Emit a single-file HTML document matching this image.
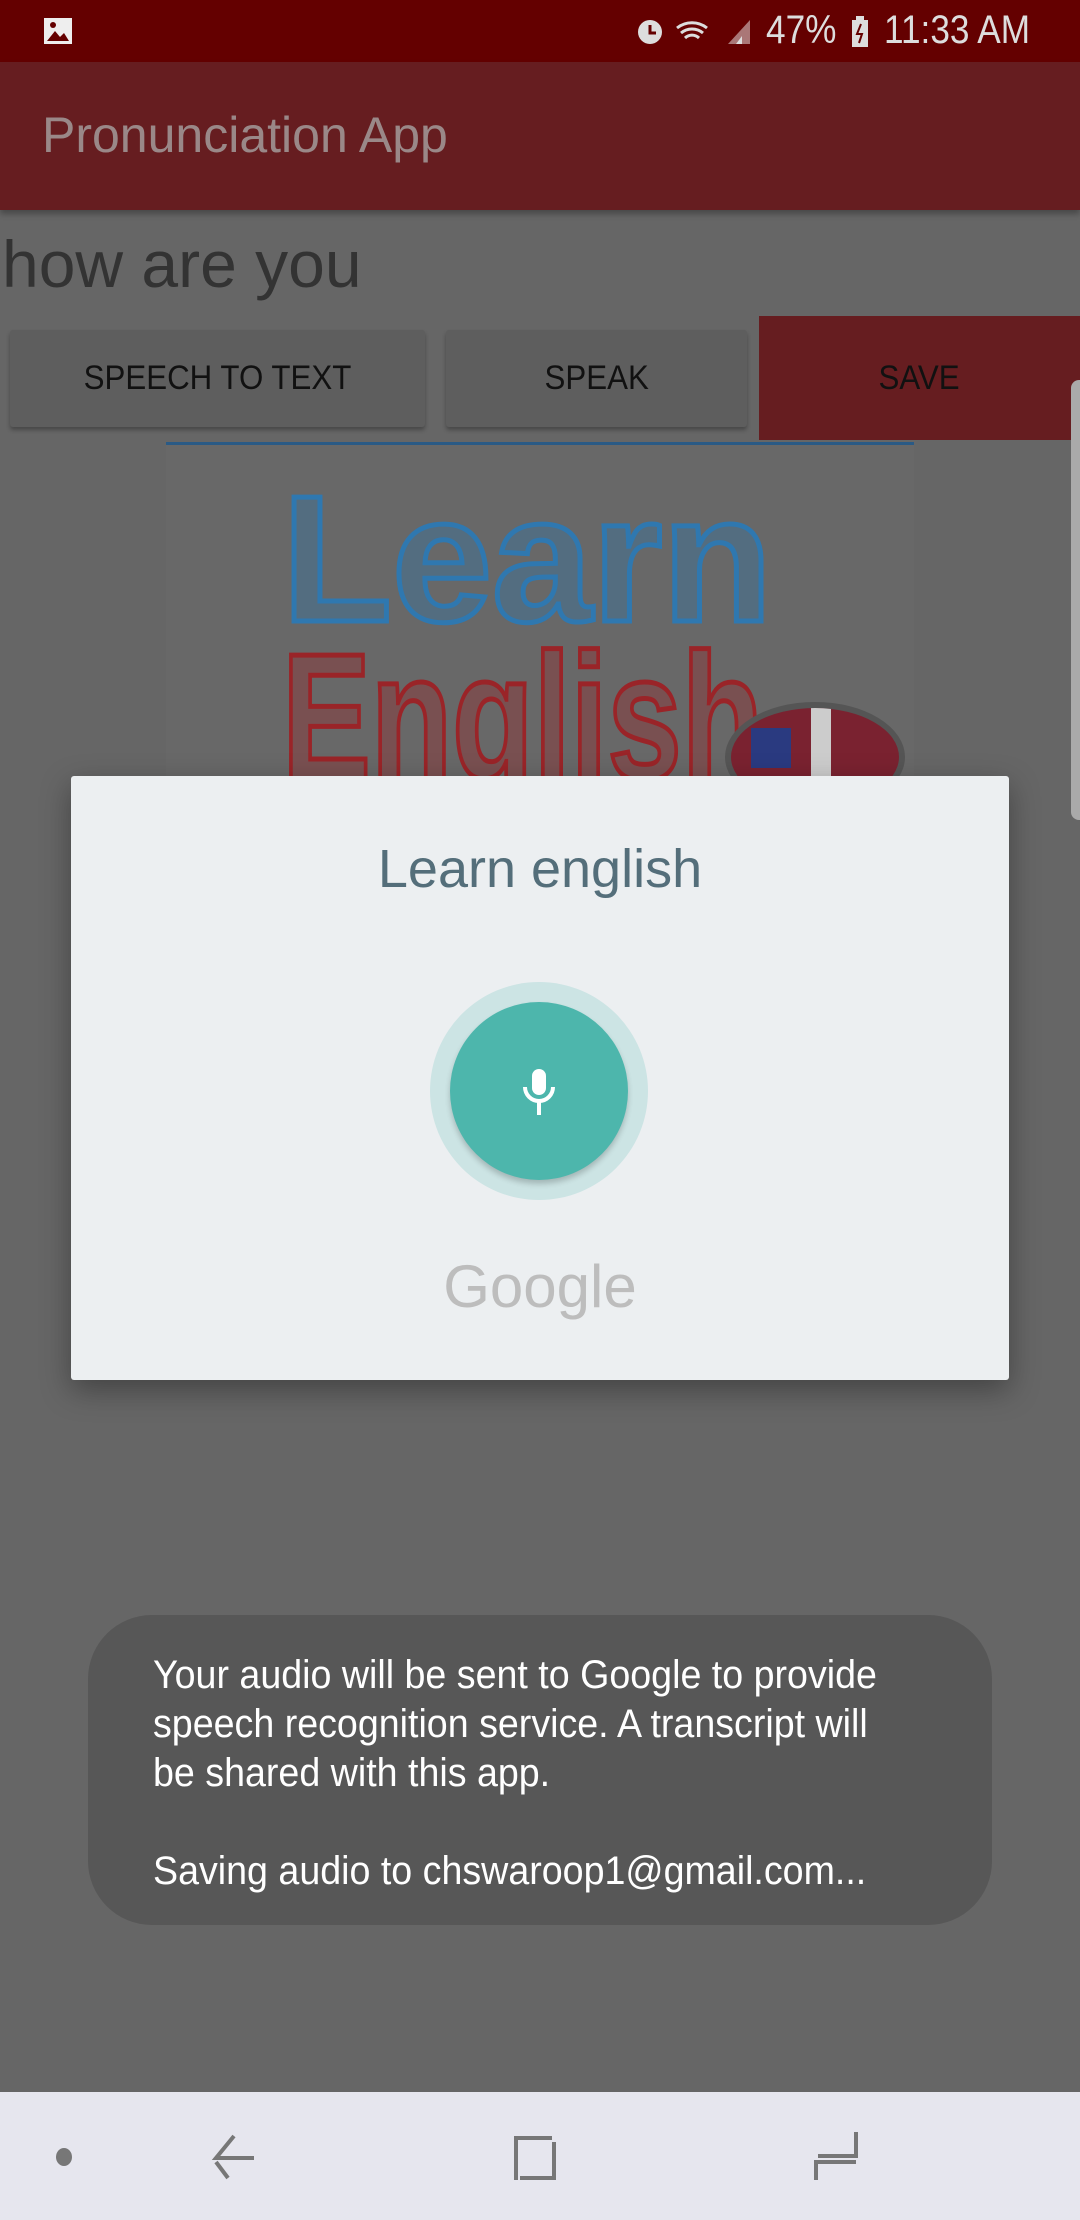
<!DOCTYPE html>
<html><head><meta charset="utf-8"><style>
*{margin:0;padding:0;box-sizing:border-box}
body{width:1080px;height:2220px;background:#666;position:relative;overflow:hidden;font-family:"Liberation Sans",sans-serif}
.abs{position:absolute}
.status{left:0;top:0;width:1080px;height:62px;background:#640000;color:#ddd}
.appbar{left:0;top:62px;width:1080px;height:148px;background:#661d20;box-shadow:0 4px 6px rgba(0,0,0,.3)}
.btn{background:#5e5e5e;box-shadow:0 3px 4px rgba(0,0,0,.3);border-radius:3px;color:#111;font-size:34px;display:flex;align-items:center;justify-content:center}
.btn span{display:inline-block;transform:scaleX(.92)}
.toast p{color:#fff;font-size:40px;line-height:49px;transform:scaleX(.94);transform-origin:0 0;white-space:nowrap}
.nar{transform:scaleX(.88);transform-origin:0 0;white-space:nowrap}
</style></head><body>
<div class="abs status">
 <svg class="abs" style="left:42px;top:16px" width="32" height="30"><rect x="2" y="2" width="28" height="26" fill="#eee"/><path d="M5 25 L13 15 L18 21 L22 17 L27 25Z" fill="#640000"/><circle cx="11" cy="9" r="3" fill="#640000"/></svg>
 <svg class="abs" style="left:632px;top:14px" width="120" height="34"><circle cx="18" cy="18" r="12" fill="#ddd"/><path d="M18 11v8h6" stroke="#640000" stroke-width="3" fill="none"/><path d="M45 14a24 24 0 0 1 30 0M49 19a17 17 0 0 1 22 0M53 24a10 10 0 0 1 14 0" stroke="#ddd" stroke-width="3" fill="none"/><path d="M96 30L118 6V30Z" fill="#aa7777"/><path d="M104 30L110 22V30Z" fill="#ddd"/></svg>
 <div class="abs nar" style="left:766px;top:8px;font-size:40px;color:#ddd">47%</div>
 <svg class="abs" style="left:851px;top:16px" width="18" height="32"><rect x="1" y="4" width="16" height="27" fill="#ddd"/><rect x="5" y="0" width="8" height="5" fill="#ddd"/><path d="M10 8L6 18H11L8 27" stroke="#640000" stroke-width="2" fill="none"/></svg>
 <div class="abs nar" style="left:884px;top:8px;font-size:40px;color:#ddd">11:33 AM</div>
</div>
<div class="abs appbar"><div class="abs" style="left:42px;top:44px;font-size:50px;color:#9a8888">Pronunciation App</div></div>
<div class="abs" style="left:2px;top:226px;font-size:66px;color:#333">how are you</div>
<div class="abs btn" style="left:10px;top:330px;width:415px;height:97px"><span>SPEECH TO TEXT</span></div>
<div class="abs btn" style="left:446px;top:330px;width:301px;height:97px"><span>SPEAK</span></div>
<div class="abs btn" style="left:759px;top:316px;width:321px;height:124px;background:#661d20;box-shadow:none;border-radius:0"><span>SAVE</span></div>
<div class="abs" style="left:166px;top:442px;width:748px;height:340px;background:#686868;border-top:3px solid #2a5a85"></div>
<div class="abs" style="left:282px;top:470px;font-size:180px;font-weight:bold;color:rgba(47,120,176,.35);-webkit-text-stroke:5px #2f78b0;line-height:180px;white-space:nowrap">Learn</div>
<div class="abs" style="left:282px;top:628px;font-size:180px;font-weight:bold;color:rgba(154,36,40,.35);-webkit-text-stroke:5px #9a2428;line-height:180px;white-space:nowrap;transform:scaleX(.74);transform-origin:0 0">English</div>
<div class="abs" style="left:725px;top:702px;width:180px;height:110px;border-radius:50%;background:#7a2230;border:6px solid #555;overflow:hidden"><div style="position:absolute;left:20px;top:20px;width:40px;height:40px;background:#2a3a80"></div><div style="position:absolute;left:80px;top:0;width:20px;height:110px;background:#ccc"></div></div>
<div class="abs" style="left:1071px;top:380px;width:9px;height:440px;background:#aaa;border-radius:8px 0 0 8px"></div>
<div class="abs" style="left:71px;top:776px;width:938px;height:604px;background:#eceff1;border-radius:3px;box-shadow:0 10px 30px rgba(0,0,0,.35)">
 <div class="abs" style="left:0;top:62px;width:938px;text-align:center;font-size:54px;color:#546e7a">Learn english</div>
 <div class="abs" style="left:359px;top:206px;width:218px;height:218px;border-radius:50%;background:#cce4e4"></div>
 <div class="abs" style="left:379px;top:226px;width:178px;height:178px;border-radius:50%;background:#4db6ac;box-shadow:0 4px 6px rgba(0,0,0,.2)"></div>
 <svg class="abs" style="left:448px;top:291px" width="40" height="50"><rect x="13" y="2" width="14" height="26" rx="7" fill="#fff"/><path d="M6 20a14 14 0 0 0 28 0M20 34v14" stroke="#fff" stroke-width="4" fill="none"/></svg>
 <div class="abs" style="left:0;top:476px;width:938px;text-align:center;font-size:60px;color:#bdbdbd">Google</div>
</div>
<div class="abs toast" style="left:88px;top:1615px;width:904px;height:310px;background:#575757;border-radius:64px">
 <p class="abs" style="left:65px;top:36px">Your audio will be sent to Google to provide<br>speech recognition service. A transcript will<br>be shared with this app.</p>
 <p class="abs" style="left:65px;top:232px">Saving audio to chswaroop1@gmail.com...</p>
</div>
<div class="abs" style="left:0;top:2092px;width:1080px;height:128px;background:#e6e6ee">
 <div class="abs" style="left:56px;top:56px;width:16px;height:18px;border-radius:50%;background:#777"></div>
 <svg class="abs" style="left:210px;top:40px" width="50" height="50"><path d="M24 4L6 26H44M6 30L18 46" stroke="#777" stroke-width="4" fill="none"/></svg>
 <svg class="abs" style="left:510px;top:40px" width="50" height="50"><path d="M6 48V6H42M44 10V46H10" stroke="#777" stroke-width="4" fill="none"/></svg>
 <svg class="abs" style="left:812px;top:38px" width="50" height="52"><path d="M44 2V26H6M4 50V32H44" stroke="#777" stroke-width="4" fill="none"/></svg>
</div>
</body></html>
